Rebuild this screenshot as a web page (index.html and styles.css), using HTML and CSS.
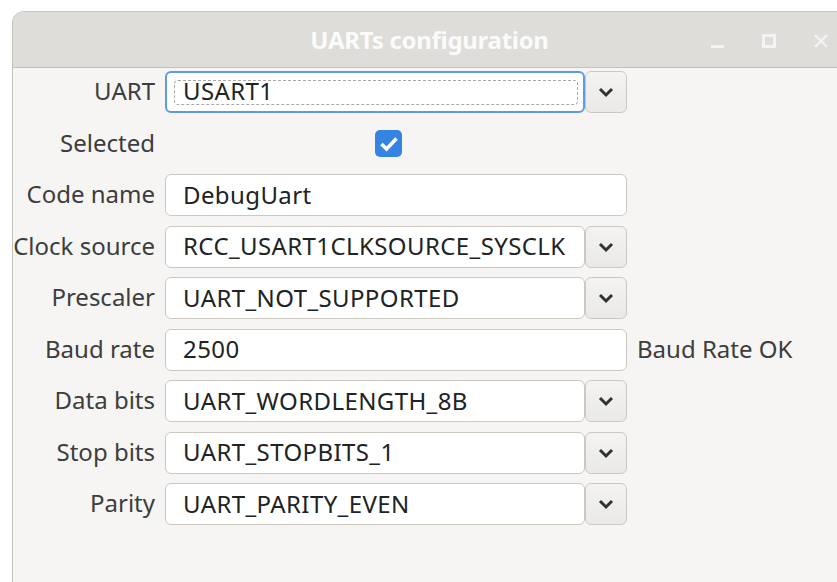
FILE: index.html
```html
<!DOCTYPE html>
<html lang="en">
<head>
<meta charset="utf-8">
<title>UARTs configuration</title>
<link rel="stylesheet" href="styles.css">
</head>
<body>
<div class="window">
  <header class="titlebar">
    <span></span>
    <h1 class="title">UARTs configuration</h1>
    <div class="controls">
      <span class="ctl ctl-min"></span>
      <span class="ctl ctl-max"></span>
      <svg class="ctl ctl-close" width="14" height="14" viewBox="0 0 14 14"><path d="M2 2 L12 12 M12 2 L2 12" stroke="#f4f3f1" stroke-width="2.4" stroke-linecap="square"/></svg>
    </div>
  </header>

  <main class="form">
    <label class="lbl">UART</label>
    <div class="combo">
      <div class="entry focused"><span class="focus-ring">USART1</span></div>
      <button class="drop"><svg width="18" height="12" viewBox="0 0 18 12"><path d="M3 3 L9 9 L15 3" fill="none" stroke="#2e3436" stroke-width="3"/></svg></button>
    </div>
    <span></span>

    <label class="lbl">Selected</label>
    <div class="check-cell"><span class="check"><svg width="24" height="24" viewBox="0 0 24 24"><path d="M4.5 12 L9.5 17 L19.5 6.5" fill="none" stroke="#fff" stroke-width="3.6"/></svg></span></div>
    <span></span>

    <label class="lbl">Code name</label>
    <div class="entry wide">DebugUart</div>
    <span></span>

    <label class="lbl">Clock source</label>
    <div class="combo">
      <div class="entry">RCC_USART1CLKSOURCE_SYSCLK</div>
      <button class="drop"><svg width="18" height="12" viewBox="0 0 18 12"><path d="M3 3 L9 9 L15 3" fill="none" stroke="#2e3436" stroke-width="3"/></svg></button>
    </div>
    <span></span>

    <label class="lbl">Prescaler</label>
    <div class="combo">
      <div class="entry">UART_NOT_SUPPORTED</div>
      <button class="drop"><svg width="18" height="12" viewBox="0 0 18 12"><path d="M3 3 L9 9 L15 3" fill="none" stroke="#2e3436" stroke-width="3"/></svg></button>
    </div>
    <span></span>

    <label class="lbl">Baud rate</label>
    <div class="entry wide">2500</div>
    <span class="status">Baud Rate OK</span>

    <label class="lbl">Data bits</label>
    <div class="combo">
      <div class="entry">UART_WORDLENGTH_8B</div>
      <button class="drop"><svg width="18" height="12" viewBox="0 0 18 12"><path d="M3 3 L9 9 L15 3" fill="none" stroke="#2e3436" stroke-width="3"/></svg></button>
    </div>
    <span></span>

    <label class="lbl">Stop bits</label>
    <div class="combo">
      <div class="entry">UART_STOPBITS_1</div>
      <button class="drop"><svg width="18" height="12" viewBox="0 0 18 12"><path d="M3 3 L9 9 L15 3" fill="none" stroke="#2e3436" stroke-width="3"/></svg></button>
    </div>
    <span></span>

    <label class="lbl">Parity</label>
    <div class="combo">
      <div class="entry">UART_PARITY_EVEN</div>
      <button class="drop"><svg width="18" height="12" viewBox="0 0 18 12"><path d="M3 3 L9 9 L15 3" fill="none" stroke="#2e3436" stroke-width="3"/></svg></button>
    </div>
    <span></span>
  </main>
</div>
</body>
</html>
```

FILE: styles.css
```css
html, body {
  margin: 0;
  padding: 0;
  background: #ffffff;
  overflow: hidden;
  height: 100%;
}

body {
  font-family: "Noto Sans", "DejaVu Sans", sans-serif;
  font-size: 24px;
  color: #2e3436;
}

/* dialog window, running off the right and bottom of the screen */
.window {
  margin: 11px 0 0 12px;
  width: 834px;
  height: 600px;
  background: #f6f5f4;
  border-left: 1px solid #c6c3bf;
  border-top: 1px solid #c9c6c2;
  border-top-left-radius: 12px;
  box-sizing: border-box;
  overflow: hidden;
}

.titlebar {
  height: 55px;
  background: #deddda;
  border-bottom: 1px solid #c4c1bd;
  display: grid;
  grid-template-columns: 1fr auto 1fr;
  align-items: center;
}

.title {
  margin: 0;
  font-family: "Noto Sans", sans-serif;
  font-size: 24px;
  font-weight: 700;
  color: #fbfbfa;
  letter-spacing: -0.3px;
  line-height: 1;
  padding-top: 1px;
}

.controls {
  justify-self: end;
  display: flex;
  align-items: center;
  padding-right: 18px;
  gap: 38px;
  padding-top: 2px;
}

.ctl-min {
  width: 13px;
  height: 3px;
  background: #f4f3f1;
  margin-top: 12px;
}

.ctl-max {
  width: 8px;
  height: 8px;
  border: 3px solid #f4f3f1;
}

.ctl-close {
  display: block;
}

/* settings form */
.form {
  display: grid;
  grid-template-columns: 142px 462px auto;
  grid-auto-rows: 42px;
  column-gap: 10px;
  row-gap: 9.5px;
  padding-top: 3px;
  align-items: center;
}

.lbl {
  justify-self: end;
  color: #3b3d3e;
  white-space: nowrap;
  padding-bottom: 3px;
}

.entry {
  box-sizing: border-box;
  height: 42px;
  background: #ffffff;
  border: 1px solid #cdc7c2;
  border-radius: 6px;
  padding: 0 0 2px 17px;
  display: flex;
  align-items: center;
  color: #202324;
  letter-spacing: 0.4px;
  white-space: nowrap;
  overflow: hidden;
}

.entry.wide {
  width: 462px;
}

.combo {
  display: flex;
  height: 42px;
}

.combo .entry {
  width: 420px;
  flex: none;
}

.entry.focused {
  border: 2px solid #5b9be6;
  padding: 0 0 0 7px;
}

.focus-ring {
  box-sizing: border-box;
  width: 404px;
  height: 25px;
  border: 1px dashed #a8a7a4;
  border-radius: 4px;
  padding: 0 0 2px 8px;
  display: flex;
  align-items: center;
  line-height: 1;
}

.drop {
  box-sizing: border-box;
  width: 42px;
  height: 42px;
  margin: 0;
  padding: 0;
  border: 1px solid #cdc7c2;
  border-radius: 6px;
  background: linear-gradient(#f4f3f2, #ebe9e7);
  display: flex;
  align-items: center;
  justify-content: center;
}

.check-cell {
  display: flex;
  align-items: center;
}

.check {
  margin-left: 210px;
  width: 27px;
  height: 27px;
  border-radius: 5px;
  background: #3584e4;
  display: flex;
  align-items: center;
  justify-content: center;
}

.status {
  color: #3b3d3e;
  white-space: nowrap;
  padding-bottom: 3px;
}
```
